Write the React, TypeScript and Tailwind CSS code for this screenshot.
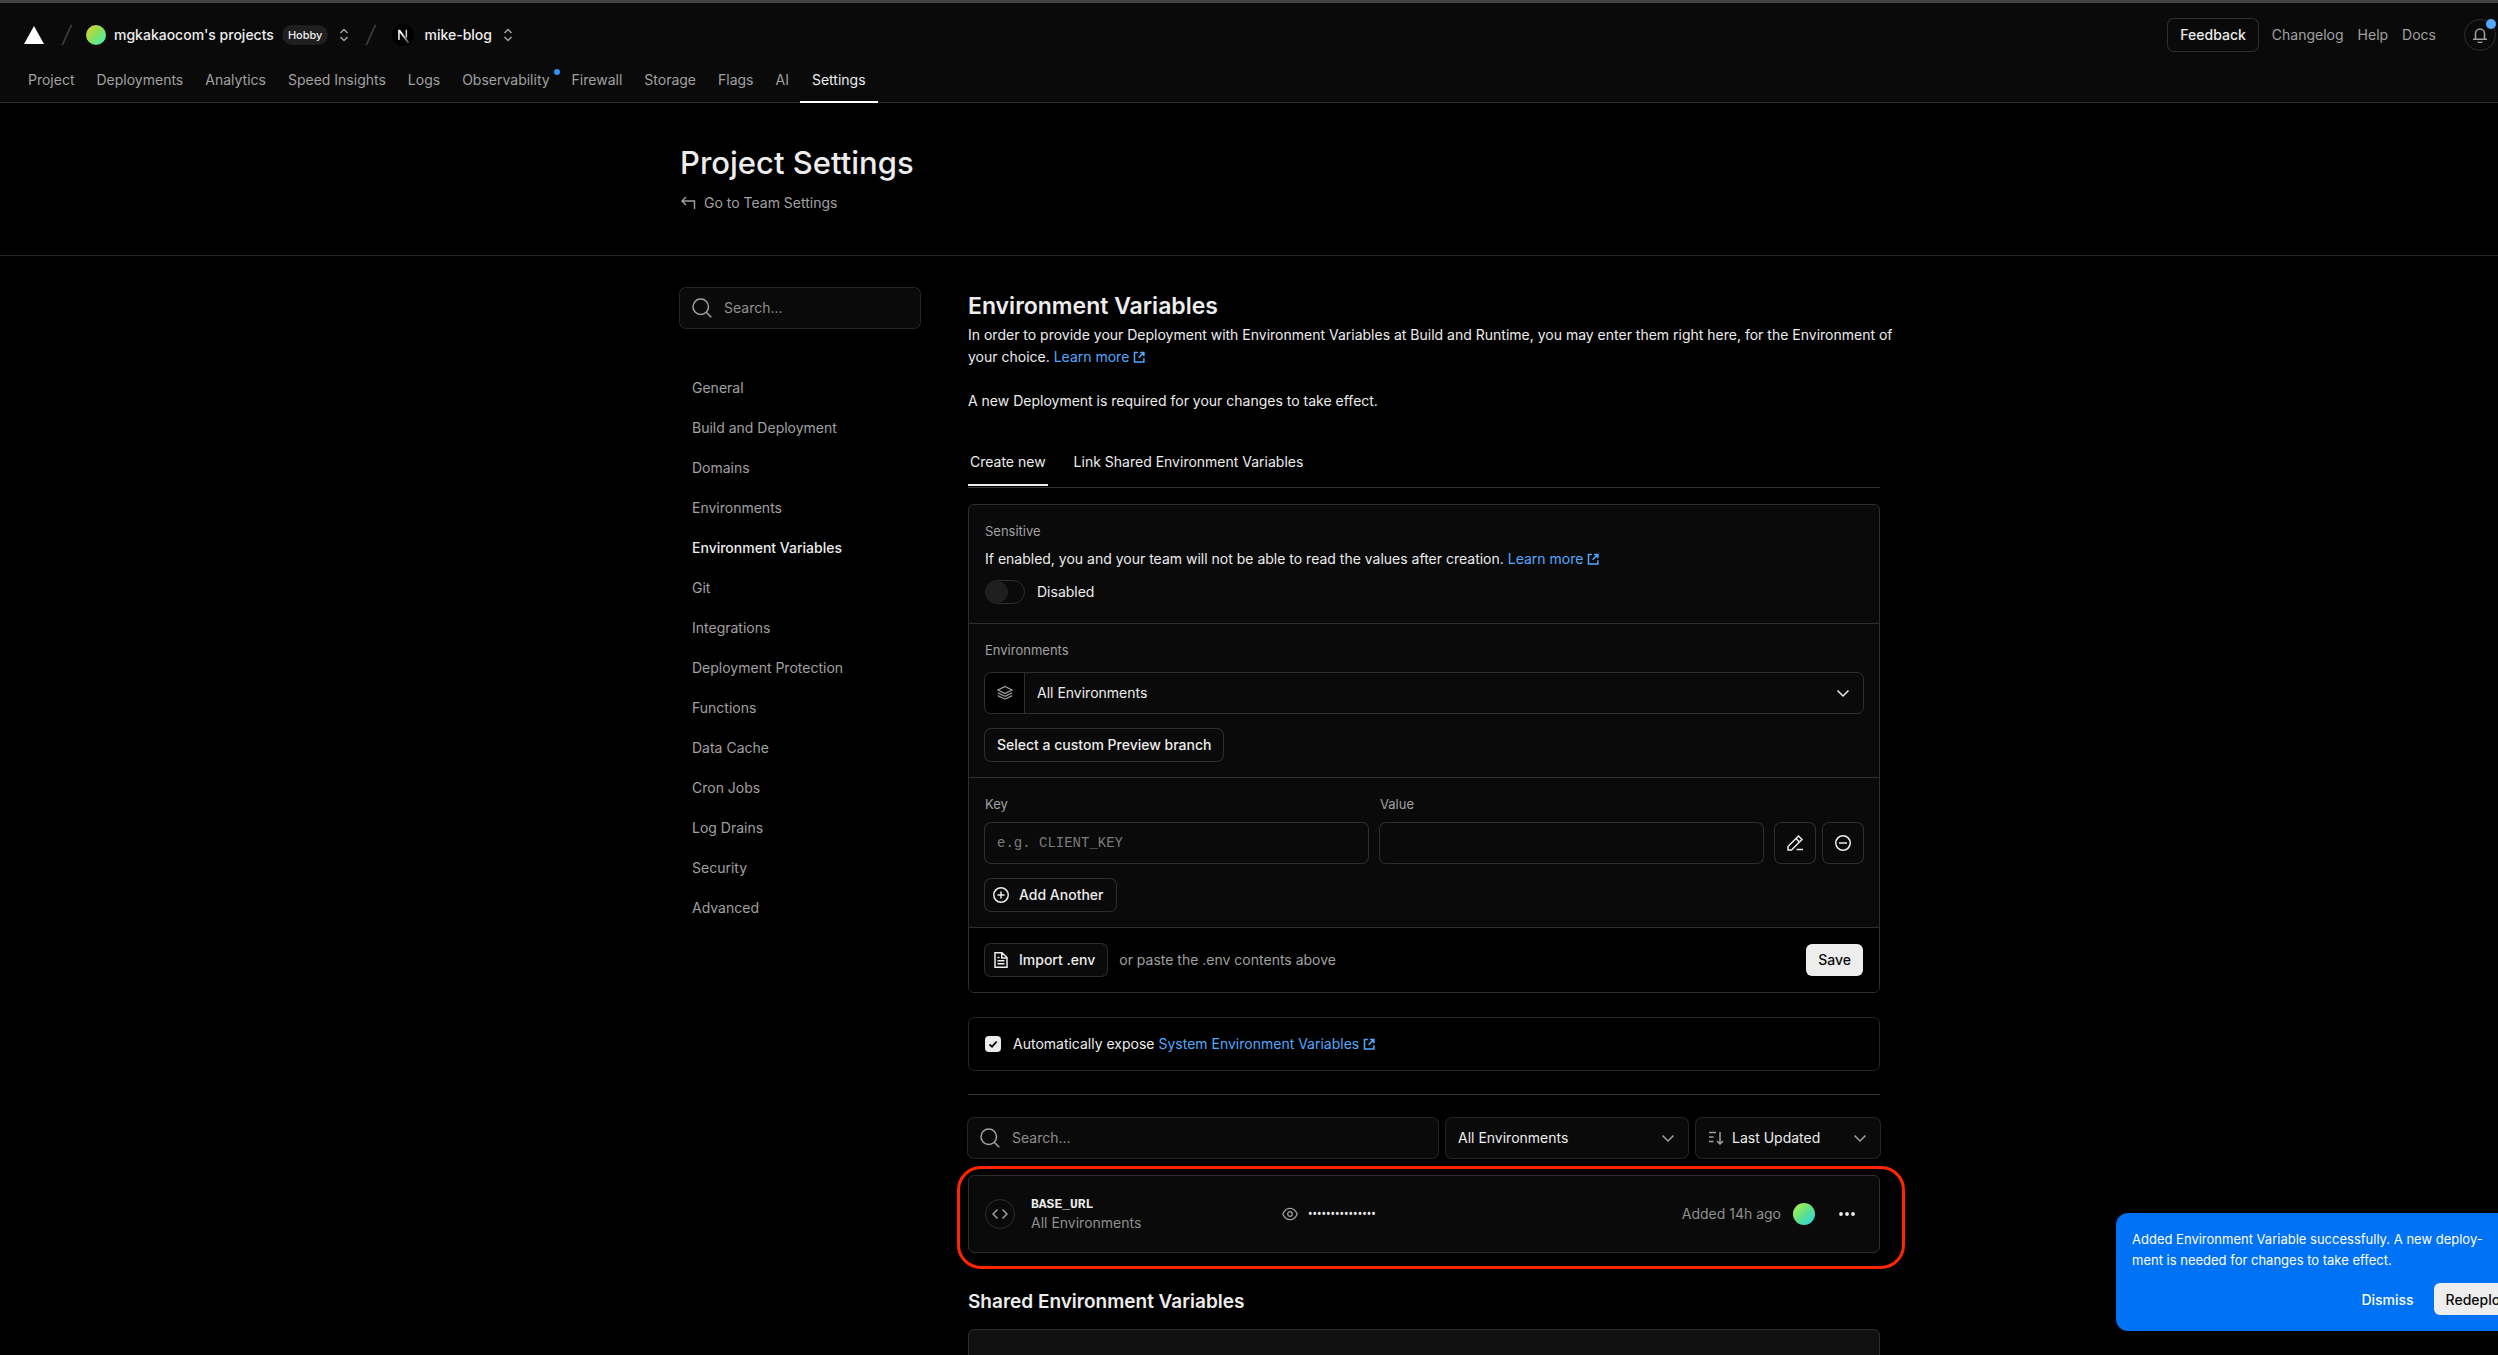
import type { ReactNode, SVGProps } from "react";

const NAV = [
  "Project",
  "Deployments",
  "Analytics",
  "Speed Insights",
  "Logs",
  "Observability",
  "Firewall",
  "Storage",
  "Flags",
  "AI",
  "Settings",
];

const SIDEBAR = [
  "General",
  "Build and Deployment",
  "Domains",
  "Environments",
  "Environment Variables",
  "Git",
  "Integrations",
  "Deployment Protection",
  "Functions",
  "Data Cache",
  "Cron Jobs",
  "Log Drains",
  "Security",
  "Advanced",
];

/* Icons, all on a 16px grid */
function Icon({ children, ...props }: SVGProps<SVGSVGElement>) {
  return (
    <svg
      viewBox="0 0 16 16"
      width="16"
      height="16"
      fill="none"
      stroke="currentColor"
      strokeWidth="1.5"
      aria-hidden="true"
      {...props}
    >
      {children}
    </svg>
  );
}

const SearchIcon = () => (
  <Icon className="h-5 w-5 shrink-0 text-[#a1a1a1]" strokeWidth="1.2">
    <circle cx="7" cy="7" r="6.2" />
    <path d="M11.4 11.4 15.4 15.4" />
  </Icon>
);

const UpDownIcon = () => (
  <Icon className="text-[#a1a1a1]">
    <path d="M4.5 6 8 2.5 11.5 6M4.5 10 8 13.5 11.5 10" />
  </Icon>
);

const ChevronIcon = ({ className }: { className: string }) => (
  <Icon className={className}>
    <path d="M2.5 5.5 8 11l5.5-5.5" />
  </Icon>
);

const ExternalIcon = () => (
  <Icon className="ml-1 inline-block h-3 w-3 align-[-1px]" strokeWidth="2">
    <path d="M6.5 2H2v12.5h12.5V9.5M9.5 2h5v5M14.2 2.2 7.5 9" />
  </Icon>
);

const SlashIcon = () => (
  <Icon className="h-[22px] w-[22px] text-[#3a3a3a]" strokeWidth="1.3">
    <path d="M4.5 15.6 11.3 .4" />
  </Icon>
);

function TextLink({ children }: { children: ReactNode }) {
  return (
    <a href="#" className="whitespace-nowrap text-[#52a8ff]">
      {children}
      <ExternalIcon />
    </a>
  );
}

function SearchBox({ label, className }: { label: string; className: string }) {
  return (
    <label className={`flex h-10 items-center gap-3 rounded-md bg-[#0a0a0a] px-3 ring-1 ring-[#242424] ${className}`}>
      <SearchIcon />
      <input
        type="search"
        aria-label={label}
        placeholder="Search..."
        className="w-full min-w-0 bg-transparent outline-none placeholder:text-[#8f8f8f]"
      />
    </label>
  );
}

function OutlineButton({ children, className = "" }: { children: ReactNode; className?: string }) {
  return (
    <button
      type="button"
      className={`flex h-8 items-center rounded-md bg-[#0a0a0a] font-medium ring-1 ring-[#2e2e2e] ${className}`}
    >
      {children}
    </button>
  );
}

function Header() {
  return (
    <header className="border-t-3 border-b border-t-[#434343] border-b-[#2e2e2e] bg-[#0a0a0a]">
      <div className="flex h-16 items-center justify-between pr-16 pl-6">
        <div className="flex items-center font-medium">
          <svg viewBox="0 0 20 18" className="mr-3 h-[18px] w-5" aria-label="Vercel">
            <path d="M10 0 20 18H0z" fill="#fff" />
          </svg>
          <SlashIcon />
          <span className="mx-2 h-5 w-5 rounded-full bg-gradient-to-br from-[#e2ce22] via-[#84e05a] to-[#22f0c0]" />
          <a href="#">mgkakaocom's projects</a>
          <span className="mx-2 rounded-full bg-[#1f1f1f] px-1.5 text-[11px] leading-5">Hobby</span>
          <button type="button" aria-label="Switch team" className="mr-2">
            <UpDownIcon />
          </button>
          <SlashIcon />
          <svg viewBox="0 0 22 22" className="mx-2.5 h-[22px] w-[22px]" aria-hidden="true">
            <defs>
              <linearGradient id="leg" x1="0" y1="0" x2="1" y2="1">
                <stop offset="0.3" stopColor="#fff" />
                <stop offset="1" stopColor="#fff" stopOpacity="0.2" />
              </linearGradient>
            </defs>
            <circle cx="11" cy="11" r="11" fill="#000" />
            <path d="M6.2 16V5.8h1.8L17.4 18.5l-1.5 1L7.7 8.6V16z" fill="url(#leg)" />
            <path d="M13.6 5.8h1.5v8.4l-1.5-1.8z" fill="#ccc" />
          </svg>
          <a href="#">mike-blog</a>
          <button type="button" aria-label="Switch project" className="ml-2">
            <UpDownIcon />
          </button>
        </div>

        <div className="flex items-center gap-3.5 text-[#a1a1a1]">
          <OutlineButton className="px-3 text-[#ededed]">Feedback</OutlineButton>
          <a href="#">Changelog</a>
          <a href="#">Help</a>
          <a href="#">Docs</a>
          <button
            type="button"
            aria-label="Notifications"
            className="relative ml-3.5 flex h-8 w-8 items-center justify-center rounded-full border border-[#2e2e2e]"
          >
            <Icon>
              <path d="M3.5 12V6.5a4.5 4.5 0 0 1 9 0V12M1 12.25h14M6 14.5a2.3 2.3 0 0 0 4 0" />
            </Icon>
            <span className="absolute -top-px -right-px h-2.5 w-2.5 rounded-full bg-[#52a8ff]" />
          </button>
        </div>
      </div>

      <nav className="flex h-[35px] pl-[17px]">
        {NAV.map((item) => (
          <a
            key={item}
            href="#"
            aria-current={item === "Settings" ? "page" : undefined}
            className={
              item === "Settings"
                ? "-mb-px border-b-2 border-white px-3 pt-[3px] text-[#ededed]"
                : "relative px-[11px] pt-[3px] text-[#a1a1a1]"
            }
          >
            {item}
            {item === "Observability" && (
              <span className="absolute top-0.5 right-px h-1.5 w-1.5 rounded-full bg-[#3291ff]" />
            )}
          </a>
        ))}
      </nav>
    </header>
  );
}

function Sidebar() {
  return (
    <aside className="w-60 shrink-0">
      <SearchBox label="Search settings" className="w-full" />
      <nav className="mt-10 flex flex-col">
        {SIDEBAR.map((item) => (
          <a
            key={item}
            href="#"
            className={
              item === "Environment Variables"
                ? "px-3 leading-10 font-medium text-[#ededed]"
                : "px-3 leading-10 text-[#a1a1a1]"
            }
          >
            {item}
          </a>
        ))}
      </nav>
    </aside>
  );
}

function CreateForm() {
  return (
    <form className="mt-4 overflow-hidden rounded-md border border-[#2e2e2e] bg-[#0a0a0a]">
      <section className="h-[119px] border-b border-[#2e2e2e] px-4 pt-4">
        <h3 className="text-[13px] leading-5 text-[#a1a1a1]">Sensitive</h3>
        <p className="mt-2">
          If enabled, you and your team will not be able to read the values after creation.{" "}
          <TextLink>Learn more</TextLink>
        </p>
        <label className="mt-[11px] flex items-center gap-3 leading-6">
          <input
            type="checkbox"
            role="switch"
            className="h-6 w-10 appearance-none rounded-full border border-[#2e2e2e] bg-[#0a0a0a] before:block before:h-[22px] before:w-[22px] before:rounded-full before:bg-[#1f1f1f]"
          />
          Disabled
        </label>
      </section>

      <section className="border-b border-[#2e2e2e] p-4">
        <label htmlFor="environments" className="block text-[13px] leading-5 text-[#a1a1a1]">
          Environments
        </label>
        <div className="relative mt-[13px] flex h-10 items-center overflow-hidden rounded-md ring-1 ring-[#2e2e2e]">
          <span className="flex h-full w-10 items-center justify-center border-r border-[#2e2e2e] bg-black text-[#a1a1a1]">
            <Icon strokeWidth="1.2">
              <path d="M8 1.5 15 5 8 8.500 1 5zM.8 7.8 8 11.4l7.2-3.6M.8 10.6 8 14.2l7.2-3.6" />
            </Icon>
          </span>
          <select id="environments" className="h-full grow appearance-none bg-[#0a0a0a] px-3 outline-none">
            <option>All Environments</option>
          </select>
          <ChevronIcon className="pointer-events-none absolute right-3 text-[#ededed]" />
        </div>
        <OutlineButton className="mt-4 px-3">Select a custom Preview branch</OutlineButton>
      </section>

      <section className="border-b border-[#2e2e2e] p-4">
        <div className="flex items-end gap-3">
          <label className="grow text-[13px] leading-5 text-[#a1a1a1]">
            Key
            <input
              type="text"
              placeholder="e.g. CLIENT_KEY"
              className="mt-[9px] block h-10 w-full rounded-md px-3 font-['Liberation_Mono',monospace] text-sm ring-1 ring-[#2e2e2e] outline-none placeholder:text-[#7d7d7d]"
            />
          </label>
          <label className="grow text-[13px] leading-5 text-[#a1a1a1]">
            Value
            <input
              type="text"
              className="mt-[9px] block h-10 w-full rounded-md px-3 font-['Liberation_Mono',monospace] text-sm ring-1 ring-[#2e2e2e] outline-none"
            />
          </label>
          <div className="flex gap-2">
            <button
              type="button"
              aria-label="Add note"
              className="flex h-10 w-10 items-center justify-center rounded-md ring-1 ring-[#2e2e2e]"
            >
              <Icon>
                <path d="M1 15v-3.5L11.5 1 15 4.5 4.5 15zM9 3.5 12.5 7M9.5 14.5H16" />
              </Icon>
            </button>
            <button
              type="button"
              aria-label="Remove"
              className="flex h-10 w-10 items-center justify-center rounded-md ring-1 ring-[#2e2e2e]"
            >
              <Icon>
                <circle cx="8" cy="8" r="7.25" />
                <path d="M4 8h8" />
              </Icon>
            </button>
          </div>
        </div>
        <OutlineButton className="mt-4 gap-2.5 pr-3 pl-2">
          <Icon>
            <circle cx="8" cy="8" r="7.25" />
            <path d="M4.5 8h7M8 4.5v7" />
          </Icon>
          Add Another
        </OutlineButton>
      </section>

      <div className="flex items-center bg-black p-4">
        <OutlineButton className="gap-2.5 pr-3 pl-2">
          <Icon>
            <path d="M2 .75h7L14 5.5v9.75H2zM8.75 1v5H14M4.5 5.5h2M4.5 8.75h7M4.5 11.75h7" />
          </Icon>
          Import .env
        </OutlineButton>
        <span className="ml-3 text-[#a1a1a1]">or paste the .env contents above</span>
        <button type="submit" className="ml-auto h-8 rounded-md bg-[#ededed] px-3 font-medium text-[#0a0a0a]">
          Save
        </button>
      </div>
    </form>
  );
}

function VariableRow() {
  return (
    <div className="relative mt-[17px] flex h-[78px] items-center rounded-md border border-[#2e2e2e] bg-[#0a0a0a] px-4">
      <span className="flex h-[30px] w-[30px] items-center justify-center rounded-full border border-[#2e2e2e] text-[#a1a1a1]">
        <Icon>
          <path d="M5.5 3.5 1 8l4.5 4.5M10.5 3.5 15 8l-4.5 4.5" />
        </Icon>
      </span>
      <div className="ml-4 w-[251px] leading-[18px]">
        <div className="font-['Liberation_Mono',monospace] text-[13px] font-bold">BASE_URL</div>
        <div className="text-[#8f8f8f]">All Environments</div>
      </div>
      <button type="button" aria-label="Reveal value" className="text-[#a1a1a1]">
        <Icon strokeWidth="1.3">
          <path d="M.8 8C2.3 4.5 4.8 2.3 8 2.3S13.7 4.5 15.2 8C13.7 11.5 11.2 13.7 8 13.7S2.3 11.5.8 8z" />
          <circle cx="8" cy="8" r="2.3" />
        </Icon>
      </button>
      <span className="ml-2.5 font-['Noto_Sans',sans-serif] text-xs text-[#ededed]">•••••••••••••••</span>
      <span className="ml-auto text-[#8f8f8f]">Added 14h ago</span>
      <span className="ml-3 h-[22px] w-[22px] rounded-full bg-gradient-to-br from-[#b4f52c] via-[#5fe085] to-[#18d2ee]" />
      <button type="button" aria-label="More options" className="ml-4 flex h-8 w-8 items-center justify-center">
        <Icon fill="currentColor" stroke="none">
          <circle cx="2" cy="8" r="1.9" />
          <circle cx="8" cy="8" r="1.9" />
          <circle cx="14" cy="8" r="1.9" />
        </Icon>
      </button>
      {/* highlight around the new variable */}
      <span className="pointer-events-none absolute -top-2.5 -right-[26px] -bottom-[17px] -left-3 rounded-3xl border-3 border-[#ff2600]" />
    </div>
  );
}

function Content() {
  return (
    <main className="min-w-0 grow">
      <h2 className="my-0.5 text-[23px] leading-8 font-semibold">Environment Variables</h2>
      <p className="-mr-6 leading-[22px]">
        In order to provide your Deployment with Environment Variables at Build and Runtime, you may enter them right
        here, for the Environment of
        <br />
        your choice. <TextLink>Learn more</TextLink>
        <br />
        <br />A new Deployment is required for your changes to take effect.
      </p>

      <div role="tablist" className="mt-8 flex h-11 gap-6 border-b border-[#333]">
        <button type="button" role="tab" aria-selected="true" className="mb-px border-b-2 border-[#ededed] px-0.5 pb-1">
          Create new
        </button>
        <button
          type="button"
          role="tab"
          aria-selected="false"
          className="mb-px border-b-2 border-transparent px-0.5 pb-1"
        >
          Link Shared Environment Variables
        </button>
      </div>

      <CreateForm />

      <div className="mt-6 flex h-[54px] items-center rounded-md border border-[#242424] px-4">
        <span className="relative flex h-4 w-4">
          <input
            type="checkbox"
            id="expose"
            defaultChecked
            className="h-4 w-4 appearance-none rounded-sm bg-[#ededed]"
          />
          <Icon className="pointer-events-none absolute inset-0 text-[#0a0a0a]" strokeWidth="1.8">
            <path d="M4.5 8.5 7 10.7 11.7 5.5" />
          </Icon>
        </span>
        <label htmlFor="expose" className="ml-3">
          Automatically expose <TextLink>System Environment Variables</TextLink>
        </label>
      </div>

      <hr className="mt-[23px] border-[#333]" />

      <div className="mt-[23px] flex gap-2">
        <SearchBox label="Search variables" className="grow" />
        <div className="relative flex h-10 w-[242px] items-center">
          <select
            aria-label="Filter by environment"
            className="h-full w-full appearance-none rounded-md bg-[#0a0a0a] px-3 ring-1 ring-[#242424] outline-none"
          >
            <option>All Environments</option>
          </select>
          <ChevronIcon className="pointer-events-none absolute right-3 text-[#a1a1a1]" />
        </div>
        <div className="relative flex h-10 w-46 items-center">
          <select
            aria-label="Sort by"
            className="h-full w-full appearance-none rounded-md bg-[#0a0a0a] pr-10 pl-9 ring-1 ring-[#242424] outline-none"
          >
            <option>Last Updated</option>
          </select>
          <Icon className="pointer-events-none absolute left-3 text-[#a1a1a1]">
            <path d="M1 2.5h7M1 7h4.5M1 11.5h4.5M12 2v11.5M9 11l3 3 3-3" />
          </Icon>
          <ChevronIcon className="pointer-events-none absolute right-3 text-[#a1a1a1]" />
        </div>
      </div>

      <VariableRow />

      <h2 className="mt-8 text-[19px] leading-[34px] font-semibold">Shared Environment Variables</h2>
      <div className="mt-2.5 h-40 rounded-md border border-[#2e2e2e] bg-[#111]" />
    </main>
  );
}

function Toast() {
  return (
    <div
      role="status"
      className="absolute right-6 bottom-6 w-[420px] rounded-xl bg-[#0072f5] p-4 leading-[21px] text-white"
    >
      <p className="text-[13px] leading-[21px]">
        Added Environment Variable successfully. A new deploy-
        <br />
        ment is needed for changes to take effect.
      </p>
      <div className="mt-3 flex justify-end gap-2 font-medium">
        <button type="button" className="h-8 px-3">
          Dismiss
        </button>
        <button type="button" className="h-8 rounded-md bg-[#ededed] px-3 text-[#0a0a0a]">
          Redeploy
        </button>
      </div>
    </div>
  );
}

export default function App() {
  return (
    <div className="h-screen overflow-hidden bg-black font-['Inter',sans-serif] text-sm text-[#ededed]">
      {/* the page runs past the right edge of the window */}
      <div className="relative -mr-[62px] h-full overflow-hidden">
        <Header />

        <div className="border-b border-[#242424]">
          <div className="mx-auto h-[152px] max-w-[1200px] pt-10">
            <h1 className="text-[31px] leading-10 font-medium">Project Settings</h1>
            <a href="#" className="mt-2.5 flex items-center gap-2 text-[#a1a1a1]">
              <Icon strokeWidth="1.4">
                <path d="M6 2 2 6l4 4M2 6h12.5v8" />
              </Icon>
              Go to Team Settings
            </a>
          </div>
        </div>

        <div className="mx-auto flex max-w-[1200px] gap-12 pt-8">
          <Sidebar />
          <Content />
        </div>

        <Toast />
      </div>
    </div>
  );
}
